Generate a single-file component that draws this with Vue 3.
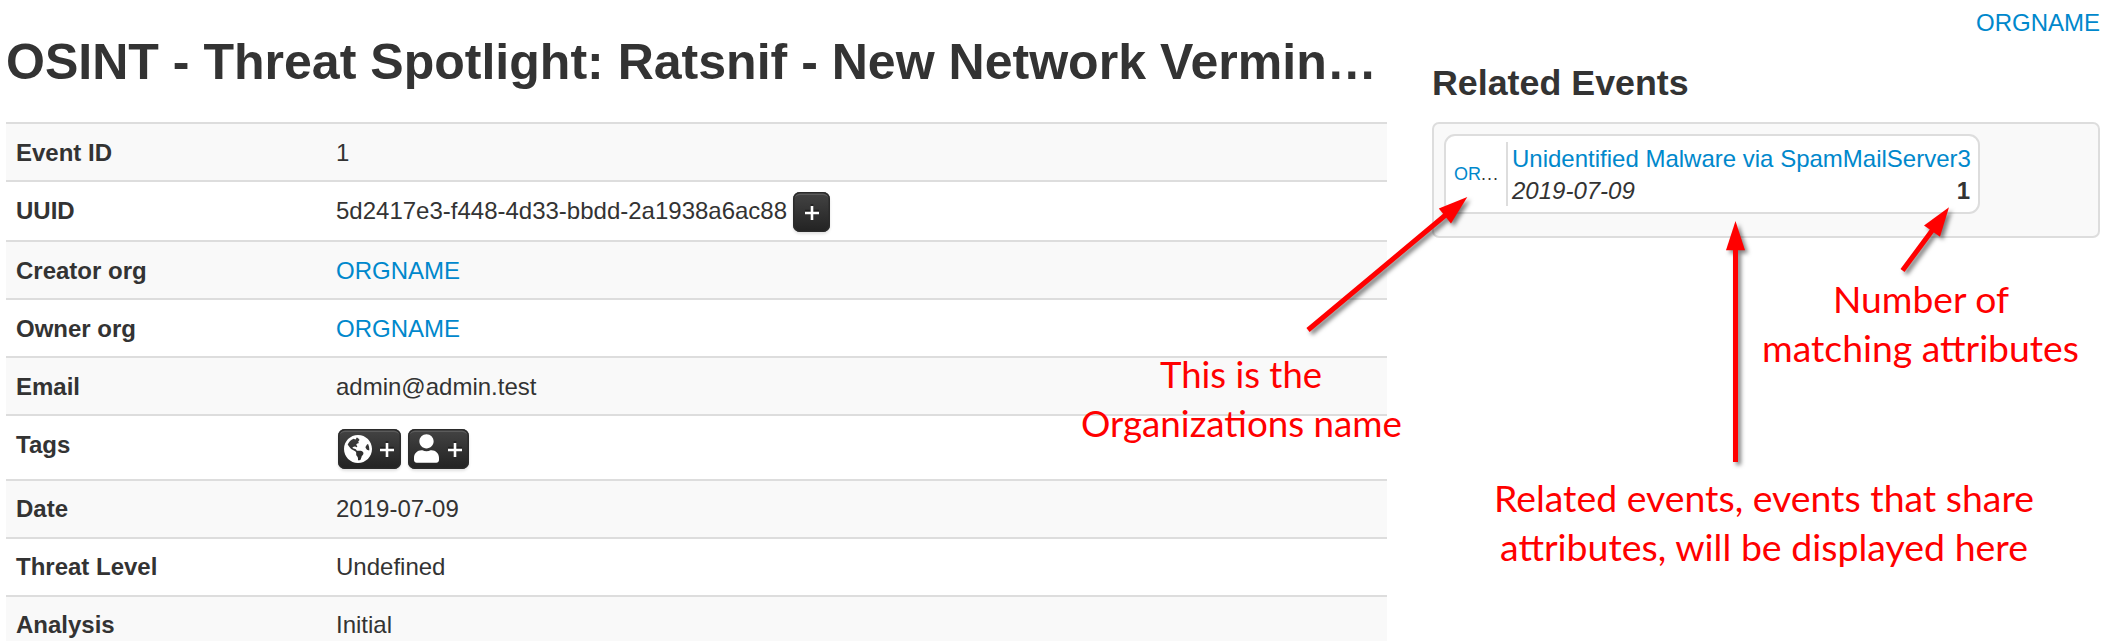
<script setup>
const rows = [
  { label: 'Event ID', value: '1' },
  { label: 'UUID', value: '5d2417e3-f448-4d33-bbdd-2a1938a6ac88', kind: 'uuid' },
  { label: 'Creator org', value: 'ORGNAME', kind: 'link' },
  { label: 'Owner org', value: 'ORGNAME', kind: 'link' },
  { label: 'Email', value: 'admin@admin.test' },
  { label: 'Tags', kind: 'tags' },
  { label: 'Date', value: '2019-07-09' },
  { label: 'Threat Level', value: 'Undefined' },
  { label: 'Analysis', value: 'Initial' },
]

const notes = [
  { text: 'This is the', x: 1160, y: 388, w: 162 },
  { text: 'Organizations name', x: 1081, y: 437, w: 321 },
  { text: 'Number of', x: 1833, y: 313, w: 176 },
  { text: 'matching attributes', x: 1762, y: 362, w: 317 },
  { text: 'Related events, events that share', x: 1494, y: 512, w: 540 },
  { text: 'attributes, will be displayed here', x: 1500, y: 561, w: 528 },
]

const globe = 'M248 8C111.03 8 0 119.03 0 256s111.03 248 248 248 248-111.03 248-248S384.97 8 248 8zm82.29 357.6c-3.9 3.88-7.99 7.95-11.31 11.28-2.99 3-5.1 6.7-6.17 10.71-1.51 5.66-2.73 11.38-4.77 16.87l-17.39 46.85c-13.76 3-28 4.69-42.65 4.69v-27.38c1.69-12.62-7.64-36.26-22.63-51.25-6-6-9.37-14.14-9.37-22.63v-32.01c0-11.64-6.27-22.34-16.46-27.97-14.37-7.95-34.81-19.06-48.81-26.11-11.48-5.78-22.1-13.14-31.65-21.75l-.8-.72a114.792 114.792 0 0 1-18.06-20.74c-9.38-13.77-24.66-36.42-34.59-51.14 20.47-45.5 57.36-82.04 103.2-101.89l24.01 12.01C203.48 89.74 216 82.01 216 70.11v-11.3c7.99-1.29 16.12-2.11 24.39-2.42l28.3 28.3c6.25 6.25 6.25 16.38 0 22.63L264 112l-10.34 10.34c-3.12 3.12-3.12 8.19 0 11.31l4.69 4.69c3.12 3.12 3.12 8.19 0 11.31l-8 8a8.008 8.008 0 0 1-5.66 2.34h-8.99c-2.08 0-4.08.81-5.58 2.27l-9.92 9.65a8.008 8.008 0 0 0-1.58 9.31l15.59 31.19c2.66 5.32-1.21 11.58-7.15 11.58h-5.64c-1.93 0-3.79-.7-5.24-1.96l-9.28-8.06a16.017 16.017 0 0 0-15.55-3.1l-31.17 10.39a11.95 11.95 0 0 0-8.17 11.34c0 4.53 2.56 8.66 6.61 10.69l11.08 5.54c9.41 4.71 19.79 7.16 30.31 7.16s22.59 27.29 32 32h66.75c8.49 0 16.62 3.37 22.63 9.37l13.69 13.69a30.503 30.503 0 0 1 8.93 21.57 46.536 46.536 0 0 1-13.72 32.98zM417 274.25c-5.79-1.45-10.84-5-14.15-9.97l-17.98-26.97a23.97 23.97 0 0 1 0-26.62l19.59-29.38c2.32-3.47 5.5-6.29 9.24-8.15l12.98-6.49C440.2 193.59 448 223.87 448 256c0 8.67-.74 17.16-1.82 25.54L417 274.25z'
const user = 'M224 256c70.7 0 128-57.3 128-128S294.7 0 224 0 96 57.3 96 128s57.3 128 128 128zm89.6 32h-16.7c-22.2 10.2-46.9 16-72.9 16s-50.6-5.8-72.9-16h-16.7C60.2 288 0 348.2 0 422.4V464c0 26.5 21.5 48 48 48h352c26.5 0 48-21.5 48-48v-41.6c0-74.2-60.2-134.4-134.4-134.4z'
</script>

<template>
  <div class="page">
    <main class="event">
      <h1>OSINT - Threat Spotlight: Ratsnif - New Network Vermin…</h1>
      <dl class="meta">
        <div v-for="row in rows" :key="row.label" class="row" :class="row.kind">
          <dt>{{ row.label }}</dt>
          <dd>
            <a v-if="row.kind === 'link'">{{ row.value }}</a>
            <template v-else-if="row.kind === 'tags'">
              <button class="btn">
                <svg class="globe" viewBox="0 8 496 496"><path :d="globe" /></svg>
                <svg class="plus" viewBox="0 0 14 14"><path d="M7 0v14M0 7h14" /></svg>
              </button>
              <button class="btn">
                <svg class="user" viewBox="0 0 448 512"><path :d="user" /></svg>
                <svg class="plus" viewBox="0 0 14 14"><path d="M7 0v14M0 7h14" /></svg>
              </button>
            </template>
            <template v-else>
              <span>{{ row.value }}</span>
              <button v-if="row.kind === 'uuid'" class="btn single">
                <svg class="plus" viewBox="0 0 14 14"><path d="M7 0v14M0 7h14" /></svg>
              </button>
            </template>
          </dd>
        </div>
      </dl>
    </main>

    <aside class="side">
      <a class="org">ORGNAME</a>
      <h3>Related Events</h3>
      <section class="related">
        <article class="card">
          <div class="card-org"><a>OR</a><span class="dots">...</span></div>
          <div class="card-body">
            <a class="card-title">Unidentified Malware via SpamMailServer3</a>
            <div class="card-foot"><i>2019-07-09</i><b>1</b></div>
          </div>
        </article>
      </section>
    </aside>

    <svg class="notes" width="2111" height="641" viewBox="0 0 2111 641">
      <g class="arrows">
        <path class="shaft" d="M1308 330L1448 213M1735.5 462V246M1902.5 270.5L1934 228" />
        <path d="M1467.3 197L1438.8 208.5L1451 223.4Z" />
        <path d="M1735.5 221L1726 250.3H1745Z" />
        <path d="M1949 207.3L1924 225.5L1940 236.8Z" />
      </g>
      <text
        v-for="note in notes"
        :key="note.text"
        :x="note.x"
        :y="note.y"
        :textLength="note.w"
        lengthAdjust="spacingAndGlyphs"
      >{{ note.text }}</text>
    </svg>
  </div>
</template>

<style>
body {
  margin: 0;
  background: #fff;
  overflow: hidden;
}
</style>

<style scoped>
.page {
  position: relative;
  display: flex;
  width: 2111px;
  height: 641px;
  overflow: hidden;
  font: 24px/34px "Liberation Sans", Arial, sans-serif;
  color: #333;
}
a {
  color: #08c;
}
.event {
  width: 1381px;
  margin-left: 6px;
}
h1 {
  box-sizing: border-box;
  margin: 0;
  height: 122px;
  padding-top: 1px;
  line-height: 122px;
  font-size: 50.05px;
  white-space: nowrap;
}
.meta {
  margin: 0;
}
.row {
  box-sizing: border-box;
  display: flex;
  height: 58px;
  padding: 12px 10px 0;
  border-top: 2px solid #ddd;
}
.row:nth-child(odd) {
  background: #f9f9f9;
}
.row:nth-child(n + 7) {
  padding-top: 11px;
}
.row.uuid {
  height: 60px;
}
.row.tags {
  height: 65px;
}
dt {
  width: 320px;
  font-weight: bold;
}
dd {
  display: flex;
  margin: 0;
}
.btn {
  box-sizing: border-box;
  display: flex;
  align-items: center;
  justify-content: space-between;
  width: 63px;
  height: 40px;
  margin: 1px 7px 0 2px;
  padding: 0 7px 0 6px;
  border: 0;
  border-radius: 7px;
  background: linear-gradient(#444, #222);
  box-shadow: inset 0 0 0 1.5px #2b2b2b, inset 0 3px 0 #5b5b5b, 0 2px 3px rgba(0, 0, 0, .12);
}
.btn + .btn {
  width: 61px;
  margin-left: 0;
}
.btn.single {
  justify-content: center;
  width: 37px;
  margin: -2px 0 0 6px;
  padding: 0;
}
.globe {
  width: 28px;
  height: 28px;
  margin-top: -1px;
  fill: #fff;
}
.user {
  width: 25px;
  height: 29px;
  margin-top: -1px;
  fill: #fff;
}
.plus {
  width: 14px;
  height: 14px;
  margin-top: 1px;
  fill: none;
  stroke: #fff;
  stroke-width: 2.6;
  filter: drop-shadow(0 -1.5px 0 rgba(0, 0, 0, .35));
}
.side {
  width: 668px;
  margin-left: 45px;
}
.org {
  display: block;
  height: 50px;
  line-height: 45px;
  text-align: right;
}
h3 {
  margin: 0;
  height: 72px;
  line-height: 66px;
  font-size: 35.8px;
}
.related {
  box-sizing: border-box;
  height: 116px;
  padding: 10px;
  border: 2px solid #ddd;
  border-radius: 7px;
  background: #f9f9f9;
}
.card {
  box-sizing: border-box;
  display: flex;
  width: 536px;
  height: 80px;
  padding: 6px 8px;
  border: 2px solid #ddd;
  border-radius: 11px;
  background: #fff;
}
.card-org {
  box-sizing: border-box;
  width: 54px;
  height: 64px;
  border-right: 2px solid #ddd;
  font-size: 18px;
  line-height: 64px;
  white-space: nowrap;
}
.dots {
  letter-spacing: 1px;
}
.card-body {
  width: 458px;
  margin-left: 4px;
  padding-top: 1px;
  line-height: 32px;
  white-space: nowrap;
}
.card-title {
  display: block;
}
.card-foot {
  display: flex;
  justify-content: space-between;
}
.notes {
  position: absolute;
  top: 0;
  left: 0;
}
.notes text {
  fill: #f00;
  font: 36px Lato, sans-serif;
}
.arrows {
  fill: #f00;
  filter: drop-shadow(3px 3px 2px rgba(0, 0, 0, .5));
}
.shaft {
  stroke: #f00;
  stroke-width: 5;
}
</style>
